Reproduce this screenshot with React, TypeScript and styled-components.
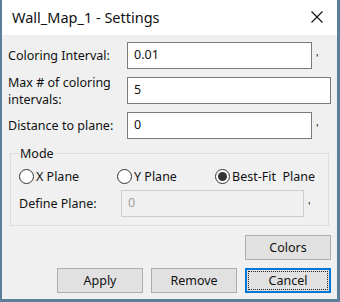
import React from "react";
import styled, { createGlobalStyle } from "styled-components";

const Global = createGlobalStyle`
  html, body { margin: 0; padding: 0; background: #ffffff; }
  body { font-family: "Noto Sans", "Open Sans", sans-serif; }
  * { box-sizing: border-box; }
`;

const Window = styled.div`
  width: 340px;
  height: 302px;
  display: flex;
  flex-direction: column;
  background: #f0f0f0;
  border-left: 2px solid #5e7f9b;
  border-right: 3px solid #5e7f9b;
  border-bottom: 3px solid #5e7f9b;
  overflow: hidden;
`;

const TitleBar = styled.div`
  height: 35px;
  flex: none;
  background: #ffffff;
  display: flex;
  align-items: center;
  justify-content: space-between;
  padding: 0 14px 1px 10px;
`;

const Title = styled.span`
  font-size: 14.5px;
  color: #111;
`;

const Close = styled.svg`
  width: 12px;
  height: 12px;
  display: block;
`;

const Body = styled.div`
  flex: 1;
  display: flex;
  flex-direction: column;
  padding: 7px 3px 0 6px;
`;

const Form = styled.div`
  display: grid;
  grid-template-columns: 119px 185px 19px;
  grid-auto-rows: 27px;
  row-gap: 8px;
  align-items: center;
`;

const Label = styled.div`
  font-size: 12.5px;
  line-height: 17px;
  color: #111;
`;

const Input = styled.div<{ $wide?: boolean; $disabled?: boolean }>`
  height: 27px;
  grid-column: ${(p) => (p.$wide ? "2 / span 2" : "auto")};
  background: ${(p) => (p.$disabled ? "#f0f0f0" : "#ffffff")};
  border: 1px solid ${(p) => (p.$disabled ? "#cccccc" : "#7a7a7a")};
  font-size: 12.5px;
  color: ${(p) => (p.$disabled ? "#a0a0a0" : "#111")};
  padding: 3px 0 0 6px;
  line-height: 17px;
`;

const Tick = styled.div`
  align-self: start;
  padding: 10px 0 0 4px;
  font-size: 11px;
  line-height: 12px;
  color: #111;
`;

const Group = styled.fieldset`
  margin: 6px 5px 0 2px;
  padding: 0 0 6px 8px;
  border: 1px solid #dcdcdc;
  min-width: 0;
  height: 81px;
`;

const Legend = styled.legend`
  font-size: 12.5px;
  color: #111;
  padding: 0 1px;
  margin-left: 0;
  line-height: 17px;
`;

const RadioRow = styled.div`
  display: flex;
  align-items: center;
  height: 24px;
  margin-top: 2px;
`;

const RadioItem = styled.div<{ $w: number }>`
  display: flex;
  align-items: center;
  width: ${(p) => p.$w}px;
  font-size: 12.5px;
  color: #111;
  gap: 2px;
`;

const RadioCircle = styled.span<{ $on?: boolean }>`
  width: 15px;
  height: 15px;
  border-radius: 50%;
  border: 1px solid #333;
  background: #fff;
  display: flex;
  align-items: center;
  justify-content: center;
  &::after {
    content: "";
    display: ${(p) => (p.$on ? "block" : "none")};
    width: 9px;
    height: 9px;
    border-radius: 50%;
    background: #333;
  }
`;

const PlaneRow = styled.div`
  display: grid;
  grid-template-columns: 102px 183px 10px;
  align-items: center;
  margin-top: 2px;
`;

const Buttons = styled.div`
  display: flex;
  flex-direction: column;
  align-items: flex-end;
  gap: 8px;
  margin-top: 9px;
  padding-right: 3px;
`;

const ButtonRow = styled.div`
  display: flex;
  gap: 8px;
`;

const Button = styled.div<{ $focus?: boolean }>`
  position: relative;
  width: 86px;
  height: 25px;
  display: flex;
  align-items: center;
  justify-content: center;
  background: #e1e1e1;
  border: ${(p) => (p.$focus ? "2px solid #0078d7" : "1px solid #adadad")};
  font-size: 12.5px;
  color: #111;
  &::after {
    content: "";
    display: ${(p) => (p.$focus ? "block" : "none")};
    position: absolute;
    inset: 1px;
    border: 1px dotted #222;
  }
`;

export default function App() {
  return (
    <>
      <Global />
      <Window>
        <TitleBar>
          <Title>Wall_Map_1 - Settings</Title>
          <Close viewBox="0 0 12 12">
            <path d="M0.5 0.5 L11.5 11.5 M11.5 0.5 L0.5 11.5" stroke="#111" strokeWidth="1.1" fill="none" />
          </Close>
        </TitleBar>
        <Body>
          <Form>
            <Label>Coloring Interval:</Label>
            <Input>0.01</Input>
            <Tick>'</Tick>
            <Label>
              Max # of coloring
              <br />
              intervals:
            </Label>
            <Input $wide>5</Input>
            <Label>Distance to plane:</Label>
            <Input>0</Input>
            <Tick>'</Tick>
          </Form>
          <Group>
            <Legend>Mode</Legend>
            <RadioRow>
              <RadioItem $w={98}>
                <RadioCircle />X Plane
              </RadioItem>
              <RadioItem $w={98}>
                <RadioCircle />Y Plane
              </RadioItem>
              <RadioItem $w={110}>
                <RadioCircle $on />Best-Fit&nbsp; Plane
              </RadioItem>
            </RadioRow>
            <PlaneRow>
              <Label>Define Plane:</Label>
              <Input $disabled>0</Input>
              <Tick>'</Tick>
            </PlaneRow>
          </Group>
          <Buttons>
            <Button>Colors</Button>
            <ButtonRow>
              <Button>Apply</Button>
              <Button>Remove</Button>
              <Button $focus>Cancel</Button>
            </ButtonRow>
          </Buttons>
        </Body>
      </Window>
    </>
  );
}
